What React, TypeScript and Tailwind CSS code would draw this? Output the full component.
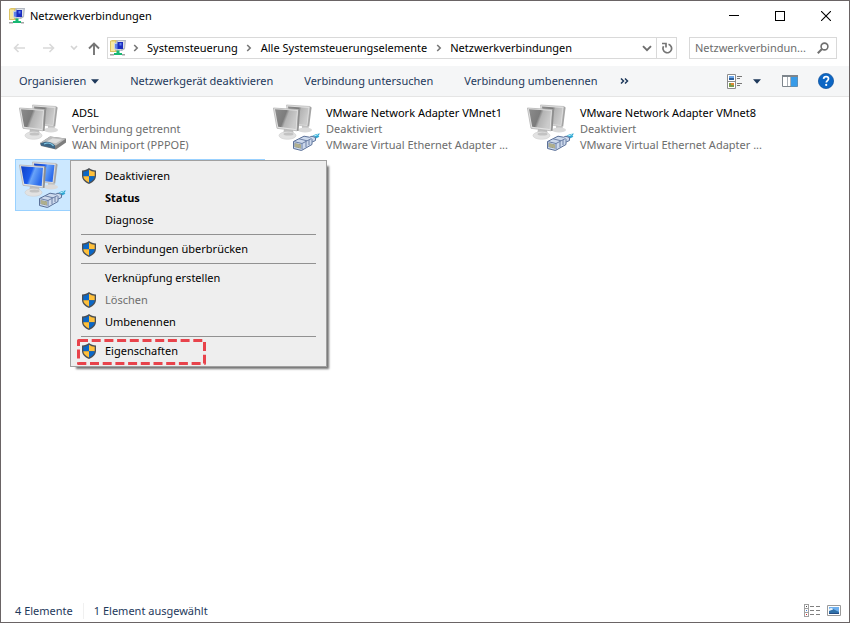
import type { ReactNode } from "react";

function NetworkIcon() {
  return (
    <svg viewBox="0 0 16 16" className="size-4 shrink-0" aria-hidden="true">
      <path d="M0 1l2-1h5v12H0z" fill="#dcc465" />
      <path d="M1 1.500h4V11H1z" fill="#f7e9a0" />
      <path d="M7 0h9l-1 9-3 2H6V1z" fill="#b4b9c2" />
      <path d="M8 1h6.500l-.5 7H8z" fill="#dde1e8" />
      <path d="M4 3l7-1v8.500L4 9.500z" fill="#cdd5e2" />
      <path d="M5 4l3-.6v5.800L5 8.500z" fill="#5f82e6" />
      <path d="M7.500 2H13v7H7.500z" fill="#1a2cc0" />
      <path d="M9.500 3h2v2.500h-2z" fill="#5f83ee" />
      <path d="M6.500 10.500h3V13H12v2H4v-2h2.500z" fill="#17b873" />
      <path d="M0 14h4v1.500H0zM12 14h3v1.500h-3z" fill="#a3a3a3" />
    </svg>
  );
}

function Shield() {
  return (
    <svg viewBox="0 0 16 16" className="size-4" aria-hidden="true">
      <path
        d="M8 0C6.200 1.500 3.800 2.400 1 2.500v5.200C1 11.500 3.600 14 8 16c4.400-2 7-4.500 7-8.300V2.500C12.200 2.400 9.800 1.500 8 0z"
        fill="#4b4f54"
      />
      <path d="M8 1.700C6.300 3 4.500 3.600 2.300 3.800v4.400H8z" fill="#0b67c6" />
      <path d="M8 1.700c1.700 1.300 3.500 1.900 5.700 2.100v4.400H8z" fill="#ffc03a" />
      <path d="M2.300 8.200H8v6.300c-3.500-1.600-5.500-3.500-5.700-6.300z" fill="#ffc03a" />
      <path d="M13.700 8.200H8v6.300c3.500-1.600 5.500-3.500 5.700-6.300z" fill="#0b67c6" />
    </svg>
  );
}

type AdapterKind = "modem" | "disabled" | "active";

function AdapterIcon({ kind }: { kind: AdapterKind }) {
  const on = kind === "active";
  const id = `screen-${kind}`;

  return (
    <svg viewBox="0 0 48 48" className="size-12 shrink-0" aria-hidden="true">
      <defs>
        <linearGradient id={id} x1="0" y1="0" x2="1" y2="0.35">
          <stop offset="0" stopColor={on ? "#0f3fc4" : "#8c8c8c"} />
          <stop offset="0.5" stopColor={on ? "#1c5cec" : "#7c7c7c"} />
          <stop offset="0.62" stopColor={on ? "#6aa4f8" : "#b4b4b4"} />
          <stop offset="1" stopColor={on ? "#2b6cec" : "#cbcbcb"} />
        </linearGradient>
      </defs>
      {/* Back monitor */}
      <path d="M29 20h6l1 5h-7z" fill="#c4c4c4" />
      <ellipse cx="32" cy="26" rx="7" ry="2.600" fill="#dadada" />
      <path d="M13.500 1l23.500 1.500-2.200 20L16 20z" fill="#dedede" stroke="#bcbcbc" strokeWidth="0.800" />
      <path d="M15 2.500l20.500 1.400-1.900 17L17 19.500z" fill={`url(#${id})`} />
      <path d="M37 2.500l1.600 1-2.400 19-1.600-.2z" fill="#a4a4a4" />
      {/* Front monitor */}
      <path d="M11 25l9 1 1 5H10z" fill="#bebebe" />
      <ellipse cx="14.500" cy="31.500" rx="8.500" ry="3.800" fill="#e2e2e2" stroke="#cfcfcf" strokeWidth="0.600" />
      <ellipse cx="15.500" cy="30" rx="5" ry="1.600" fill="#c2c2c2" />
      <path d="M.4 4l25 1.600-1.400 21.200L4 24.300z" fill="#e2e2e2" stroke="#b4b4b4" strokeWidth="0.800" />
      <path d="M2 5.200l22 1.500-1.300 18.300L5.200 22.800z" fill={`url(#${id})`} />
      <path d="M25.400 5.600l1.600.8-1.500 20.600-1.500-.2z" fill="#8c8c8c" />
      {kind === "modem" ? (
        <g>
          <path d="M21 39l10-6.500 16 2v4L37 45.500 22 42z" fill="#7e7e7e" />
          <path d="M21 39l10-6.500 16 2-10 7z" fill="#bdbdbd" />
          <path d="M28 37.500l5.500-3.300 9.500 1.200-6 3.800z" fill="#dedede" />
          <path d="M21.500 39.500c5-3 11-2 14.500 2v3.300L22 41.500z" fill="#3d6585" />
          <path d="M25 40c3.500-1.600 7.500-1 9.500 1.800" fill="none" stroke="#83cbe9" strokeWidth="1.200" />
        </g>
      ) : (
        <g>
          <path d="M37 34.500c2-3 5-4.500 10-5l-1.600 2.300 1 .9-6.400 3.300z" fill="#2fa6d2" />
          <path d="M40 32.500l5-2" stroke="#b5eefa" />
          <path
            d="M20.500 37.500L31 32.200l5.500 1 2.500-1 3.500 1.300v3l-3.500 1.600v2.400l-10.500 6-8-2z"
            fill="#cdd9ec"
            stroke="#5b7199"
          />
          <path
            d="M20.500 37.500l8.500 2 9.500-5M29 39.500v6M33 37.500v5.600M26 34.800l8 2M36 36v5M39 35v3"
            fill="none"
            stroke="#6c80a6"
          />
          <path d="M21.500 39l6.500 1.500v4l-6.500-1.600z" fill="#7f8482" />
          <path d="M23 39.500v3.500M25 40v3.500M27 40.500v3.500" stroke="#ebe39a" strokeWidth="0.900" />
        </g>
      )}
    </svg>
  );
}

function Crumb({ children }: { children: ReactNode }) {
  return (
    <li className="flex items-center">
      <span className="flex w-[23px] justify-center">
        <svg viewBox="0 0 6 8" className="h-2 w-1.5" aria-hidden="true">
          <path d="M1.200 1l3 3-3 3" fill="none" stroke="#777" strokeWidth="1.600" />
        </svg>
      </span>
      <a href="#" className="whitespace-nowrap">
        {children}
      </a>
    </li>
  );
}

function Caret() {
  return (
    <svg viewBox="0 0 8 5" className="h-[5px] w-2" aria-hidden="true">
      <path d="M0 .3h8L4 4.700z" fill="#1e395b" />
    </svg>
  );
}

type AdapterProps = {
  name: string;
  status: string;
  device: string;
  kind: AdapterKind;
};

function Adapter({ name, status, device, kind }: AdapterProps) {
  return (
    <button className="flex h-[52px] w-full gap-[5px] border border-transparent pl-[3px] text-left">
      <AdapterIcon kind={kind} />
      <span className="flex min-w-0 flex-col pt-px leading-4 whitespace-nowrap text-[#6d6d6d]">
        <span className="text-black">{name}</span>
        <span>{status}</span>
        <span>{device}</span>
      </span>
    </button>
  );
}

type MenuEntry = {
  label: string;
  shield?: boolean;
  bold?: boolean;
  disabled?: boolean;
};

const menuGroups: MenuEntry[][] = [
  [
    { label: "Deaktivieren", shield: true },
    { label: "Status", bold: true },
    { label: "Diagnose" },
  ],
  [{ label: "Verbindungen überbrücken", shield: true }],
  [
    { label: "Verknüpfung erstellen" },
    { label: "Löschen", shield: true, disabled: true },
    { label: "Umbenennen", shield: true },
  ],
  [{ label: "Eigenschaften", shield: true }],
];

function ContextMenu() {
  return (
    <div
      role="menu"
      className="absolute top-0 left-[54px] z-10 w-[257px] border border-[#a0a0a0] bg-[#eeeeee] py-1 shadow-[4px_4px_2px_-2px_rgba(0,0,0,0.55)]"
    >
      {menuGroups.map((group, i) => (
        <div key={i} role="group">
          {i > 0 && <hr className="mx-2.5 my-[3px] border-t border-[#919191]" />}
          {group.map(({ label, shield, bold, disabled }) => (
            <button
              key={label}
              role="menuitem"
              disabled={disabled}
              className={`flex h-[22px] w-full items-center gap-2 pl-2.5 ${
                bold ? "font-bold" : ""
              } ${disabled ? "text-[#6d6d6d]" : "text-black"}`}
            >
              <span className="size-4">{shield && <Shield />}</span>
              {label}
            </button>
          ))}
        </div>
      ))}
      {/* Highlight around the last entry */}
      <svg
        viewBox="0 0 129 26"
        className="pointer-events-none absolute bottom-px left-1.5 h-[26px] w-[129px]"
        aria-hidden="true"
      >
        <path
          d="M3 1.500h124.500v23H1.500V1.500z"
          fill="none"
          stroke="#e8434b"
          strokeWidth="3"
          strokeLinejoin="round"
          strokeDasharray="9 3.700"
          strokeDashoffset="1"
        />
      </svg>
    </div>
  );
}

export default function App() {
  return (
    <div className="flex min-h-screen flex-col border border-[#6a6465] bg-white font-['Noto_Sans','Open_Sans',sans-serif] text-[11px] leading-4 text-black">
      <header className="flex h-[30px] items-center pl-2">
        <NetworkIcon />
        <h1 className="ml-[5px] flex-1">Netzwerkverbindungen</h1>
        <button aria-label="Minimieren" className="flex h-full w-[46px] items-center justify-center">
          <svg viewBox="0 0 10 10" className="size-2.5" shapeRendering="crispEdges">
            <path d="M0 4h10v1H0z" />
          </svg>
        </button>
        <button aria-label="Maximieren" className="flex h-full w-[46px] items-center justify-center">
          <svg viewBox="0 0 10 10" className="size-2.5">
            <rect x="0.500" y="0.500" width="9" height="9" fill="none" stroke="#000" />
          </svg>
        </button>
        <button aria-label="Schließen" className="flex h-full w-[46px] items-center justify-center">
          <svg viewBox="0 0 10 10" className="size-2.5">
            <path d="M0 0l10 10M10 0L0 10" stroke="#000" strokeWidth="1.100" />
          </svg>
        </button>
      </header>

      <nav className="mb-px flex h-[34px] items-center px-3">
        <button aria-label="Zurück" className="w-[30px]">
          <svg viewBox="0 0 12 10" className="h-2.5 w-3">
            <path d="M12 5H1.500M5.500 1l-4 4 4 4" fill="none" stroke="#d9d9d9" strokeWidth="1.600" />
          </svg>
        </button>
        <button aria-label="Vorwärts" className="w-[27px]">
          <svg viewBox="0 0 12 10" className="h-2.5 w-3">
            <path d="M0 5h10.500M6.500 1l4 4-4 4" fill="none" stroke="#d9d9d9" strokeWidth="1.600" />
          </svg>
        </button>
        <button aria-label="Zuletzt besucht" className="w-[18px]">
          <svg viewBox="0 0 8 6" className="h-1.5 w-2">
            <path d="M1 1l3 3 3-3" fill="none" stroke="#d4d4d4" strokeWidth="1.600" />
          </svg>
        </button>
        <button aria-label="Nach oben" className="w-[19px]">
          <svg viewBox="0 0 12 13" className="h-[13px] w-3">
            <path d="M6 13V2M1 6.500l5-5 5 5" fill="none" stroke="#757575" strokeWidth="1.900" />
          </svg>
        </button>
        <div className="flex h-[22px] min-w-0 flex-1 items-center border border-[#d9d9d9] pl-0.5">
          <NetworkIcon />
          <ol className="-ml-0.5 flex min-w-0 flex-1">
            <Crumb>Systemsteuerung</Crumb>
            <Crumb>Alle Systemsteuerungselemente</Crumb>
            <Crumb>Netzwerkverbindungen</Crumb>
          </ol>
          <button aria-label="Verlauf" className="px-1">
            <svg viewBox="0 0 10 7" className="h-[7px] w-2.5">
              <path d="M1 1.200l4 4 4-4" fill="none" stroke="#6e6e6e" strokeWidth="1.900" />
            </svg>
          </button>
          <button
            aria-label="Aktualisieren"
            className="flex h-full w-5 items-center justify-center border-l border-[#d9d9d9]"
          >
            <svg viewBox="0 0 12 12" className="size-3">
              <path
                d="M7.500 2.300A4.300 4.300 0 1 1 2.600 4.200M1 1.500h4v4"
                fill="none"
                stroke="#757575"
                strokeWidth="1.700"
              />
            </svg>
          </button>
        </div>
        <label className="ml-3 flex h-[22px] w-[148px] items-center border border-[#d9d9d9] pr-[7px] pl-[5px]">
          <input
            type="text"
            aria-label="Netzwerkverbindungen durchsuchen"
            placeholder="Netzwerkverbindun..."
            className="-mr-1 w-full min-w-0 outline-none placeholder:text-[#6d6d6d]"
          />
          <svg viewBox="0 0 12 12" className="size-3 shrink-0">
            <circle cx="7.500" cy="4.500" r="3.400" fill="none" stroke="#707070" strokeWidth="1.600" />
            <path d="M5.200 6.800L.8 11.200" stroke="#707070" strokeWidth="2" />
          </svg>
        </label>
      </nav>

      <div className="flex h-[31px] items-center border-b border-[#e5e5e5] bg-[#f5f6f7] pr-[15px] pl-[18px] whitespace-nowrap text-[#1e395b]">
        <div className="flex flex-1 items-center gap-[31px]">
          <button className="flex items-center gap-[5px]">
            Organisieren
            <Caret />
          </button>
          <button>Netzwerkgerät deaktivieren</button>
          <button>Verbindung untersuchen</button>
          <button>Verbindung umbenennen</button>
          <button aria-label="Weitere Befehle" className="-ml-2">
            <svg viewBox="0 0 9 6" className="h-1.5 w-[9px]">
              <path d="M1 .5L3.500 3 1 5.500M5 .5L7.500 3 5 5.500" fill="none" stroke="#1e395b" strokeWidth="1.500" />
            </svg>
          </button>
        </div>
        <button aria-label="Ansicht" className="flex items-center gap-2.5">
          <svg viewBox="0 0 16 15" className="h-[15px] w-4">
            <path d="M.5.500h8v14h-8zM.5 7.500h8" fill="#fff" stroke="#8c8c8c" />
            <path d="M2 2h5v2H2z" fill="#6ba5e8" />
            <path d="M2 4h5v2H2z" fill="#2c5f9c" />
            <path d="M2 9h5v4H2z" fill="#7a9a4a" />
            <path d="M4 9h3v2H4z" fill="#e28a34" />
            <path d="M10 2.500h5M10 4.500h3M10 9.500h5M10 11.500h3" stroke="#777" />
          </svg>
          <Caret />
        </button>
        <button aria-label="Vorschaufenster" className="ml-[21px]">
          <svg viewBox="0 0 16 12" className="block h-3 w-4">
            <path d="M.5.500h15v11H.5z" fill="#fff" stroke="#7d858c" />
            <path d="M0 0h16v2H0z" fill="#7d858c" />
            <path d="M5.500 2v9M8.500 2v9" stroke="#aab0b6" />
            <path d="M9 2h6.500v9.500H9z" fill="#379be8" />
          </svg>
        </button>
        <button aria-label="Hilfe" className="ml-5">
          <svg viewBox="0 0 16 16" className="block size-4">
            <circle cx="8" cy="8" r="7.600" fill="#0c66c4" stroke="#0a4d9a" strokeWidth="0.700" />
            <path d="M5.600 5.900c.1-1.500 1.100-2.200 2.500-2.200s2.400.8 2.400 2.100c0 1.700-2.200 1.800-2.200 3.700" fill="none" stroke="#fff" strokeWidth="1.700" />
            <circle cx="8.200" cy="11.900" r="1.100" fill="#fff" />
          </svg>
        </button>
      </div>

      <main className="flex-1 px-3.5 pt-1.5">
        <ul className="grid grid-cols-[repeat(auto-fill,250px)] gap-1">
          <li>
            <Adapter name="ADSL" status="Verbindung getrennt" device="WAN Miniport (PPPOE)" kind="modem" />
          </li>
          <li>
            <Adapter
              name="VMware Network Adapter VMnet1"
              status="Deaktiviert"
              device="VMware Virtual Ethernet Adapter ..."
              kind="disabled"
            />
          </li>
          <li>
            <Adapter
              name="VMware Network Adapter VMnet8"
              status="Deaktiviert"
              device="VMware Virtual Ethernet Adapter ..."
              kind="disabled"
            />
          </li>
          <li className="relative col-start-1 border border-[#99d1ff] bg-[#cce8ff]">
            <button aria-label="Netzwerkverbindung" className="block h-[50px] w-full pl-[3px]">
              <AdapterIcon kind="active" />
            </button>
            <ContextMenu />
          </li>
        </ul>
      </main>

      <footer className="flex h-[23px] items-center pr-2 pl-3.5 text-[#1e395b]">
        <span className="border-r border-[#f0f0f0] pr-2.5">4 Elemente</span>
        <span className="flex-1 pl-2.5">1 Element ausgewählt</span>
        <button aria-label="Details">
          <svg viewBox="0 0 16 13" className="block h-[13px] w-4" shapeRendering="crispEdges">
            <path d="M.5.500h4v12h-4zM.5 4.500h4M.5 8.500h4" fill="#fff" stroke="#a0a0a0" />
            <path d="M2 2h1v1H2z" fill="#444" />
            <path d="M2 6h1v1H2z" fill="#3d7fe0" />
            <path d="M2 10h1v1H2z" fill="#d02828" />
            <path d="M6 2.500h4M12 2.500h4M6 6.500h4M12 6.500h4M6 10.500h4M12 10.500h4" stroke="#808080" />
          </svg>
        </button>
        <button aria-label="Große Symbole" className="ml-[7px]">
          <svg viewBox="0 0 14 11" className="block h-[11px] w-3.5">
            <path d="M.5.500h13v10H.5z" fill="#fff" stroke="#9a9a9a" />
            <path d="M2 2h10v7H2z" fill="#6fb0ee" />
            <path d="M2 5l4-1 6 3v2H2z" fill="#3070a8" />
            <path d="M2 4c2-2 4-1 4 .5L2 6z" fill="#e2f1fc" />
            <path d="M2 8h10v1H2z" fill="#234c84" />
          </svg>
        </button>
      </footer>
    </div>
  );
}
